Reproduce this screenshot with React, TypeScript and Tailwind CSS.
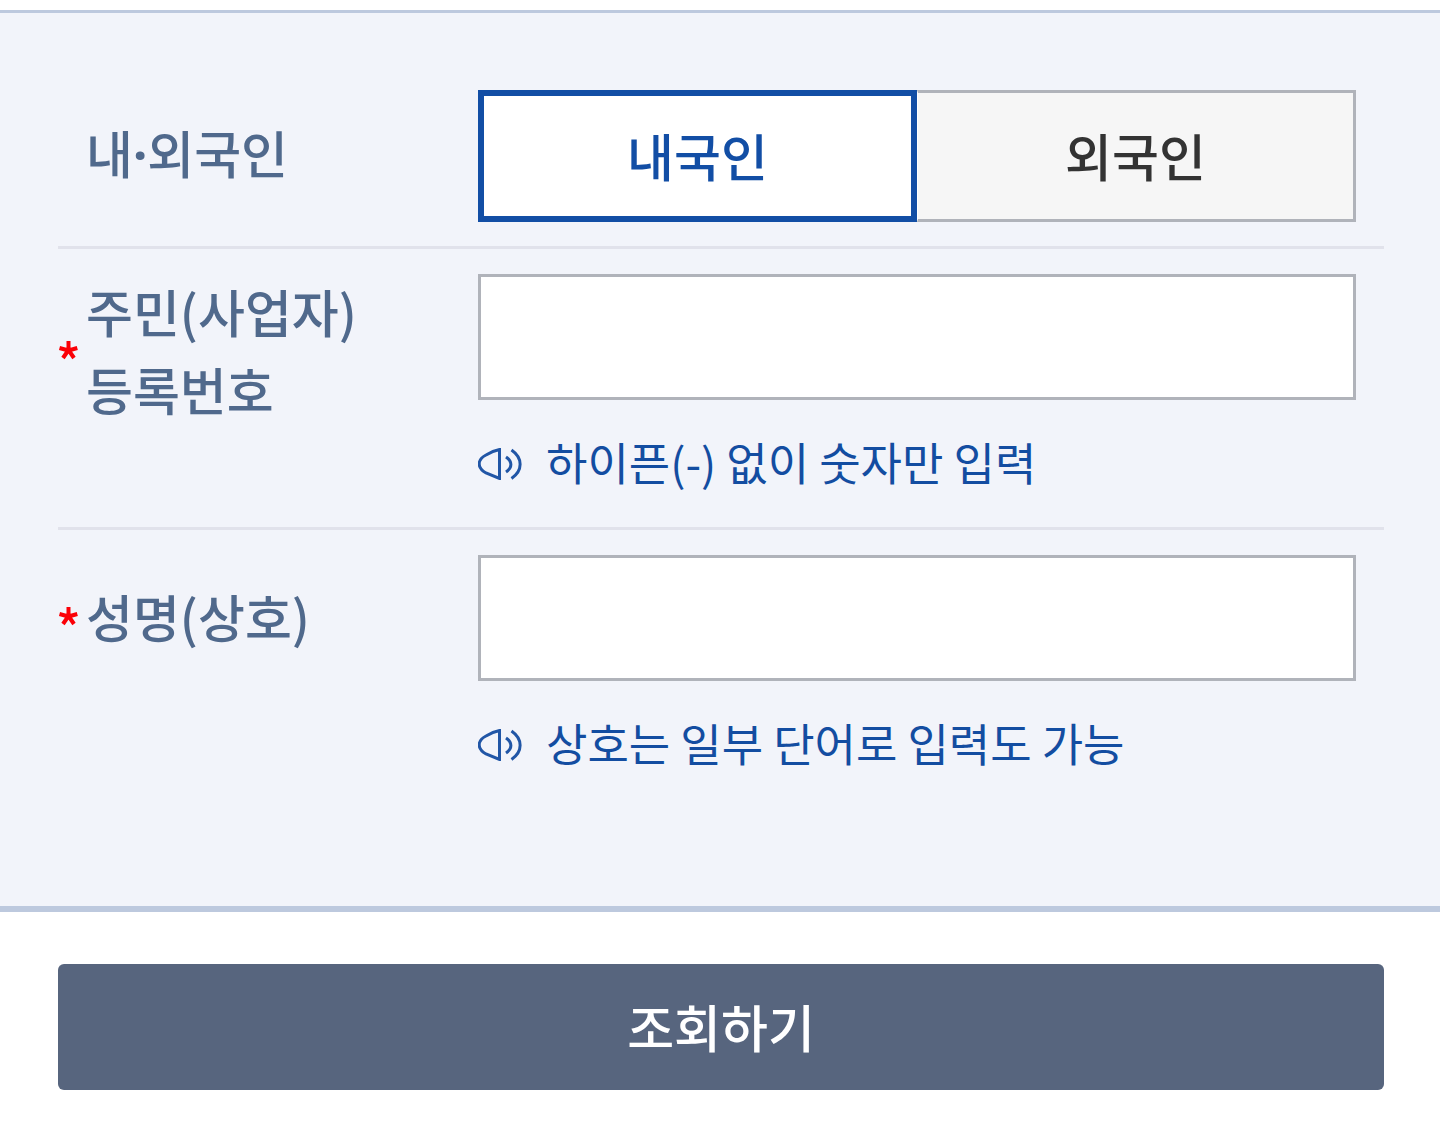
import { useState } from 'react'
import type { ReactNode } from 'react'

const residencyOptions = ['내국인', '외국인']

function RequiredMark() {
  return (
    <svg className="w-5 h-5 shrink-0" viewBox="0 0 20 20" fill="none" stroke="#fb0007" strokeWidth="4" aria-hidden="true">
      <path d="M10.500 11V1M10.500 10.500 1.500 8M10.500 10.500 19.300 8M10.500 10 5 18M10.500 10 16 18" />
    </svg>
  )
}

function SpeakerIcon() {
  return (
    <svg className="w-11 h-8 shrink-0" viewBox="0 0 44 32" fill="none" stroke="#2156a6" strokeWidth="3" aria-hidden="true">
      <path d="M21.500 1.500V30.500L8 25C3.500 22.500 1.200 19.500 1.200 16S4 9 8 7C12 4.500 16 2.500 21.500 1.500Z" />
      <path d="M28 9c6.500 4.500 6.500 10.500 0 15" />
      <path d="M33.500 2c11.500 8 11.500 20.500 0 28.500" />
    </svg>
  )
}

function Hint({ id, children }: { id: string; children: ReactNode }) {
  return (
    <p id={id} className="mt-6 flex h-[79px] items-center gap-6 text-[45px] font-normal text-[#134da1]">
      <SpeakerIcon />
      <span className="pb-1">{children}</span>
    </p>
  )
}

interface FieldProps {
  id: string
  label: ReactNode
  hint: string
}

function Field({ id, label, hint }: FieldProps) {
  return (
    <div className="flex items-start pr-7 pt-[25px] pb-6">
      <label htmlFor={id} className="-mt-0.5 flex min-h-[126px] w-[420px] shrink-0 items-center gap-2 text-[51px] leading-[78px] font-medium text-[#50698c]">
        <RequiredMark />
        <span>{label}</span>
      </label>
      <div className="min-w-0 flex-1">
        <input
          id={id}
          type="text"
          aria-describedby={`${id}-hint`}
          className="block h-[126px] w-full border-3 border-[#b0b3ba] bg-white px-6 text-[45px] text-[#333] outline-none"
        />
        <Hint id={`${id}-hint`}>{hint}</Hint>
      </div>
    </div>
  )
}

export default function App() {
  const [residency, setResidency] = useState('내국인')

  return (
    <form className="bg-white pt-2.5 pb-12 font-['Noto_Sans_CJK_KR',sans-serif]" onSubmit={e => e.preventDefault()}>
      <section className="border-t-3 border-b-6 border-[#bdc9de] bg-[#f2f4fa] pt-[52px] pr-14 pb-[98px] pl-[58px]">
        <div className="divide-y-3 divide-[#e1e2eb]">
          {/* Residency toggle */}
          <div className="flex items-center pr-7 pt-[25px] pb-6">
            <span id="residency" className="w-[420px] shrink-0 pb-1.5 pl-7 text-[51px] leading-[78px] font-medium text-[#50698c]">
              내<span className="font-['Noto_Sans',sans-serif] font-bold">·</span>외국인
            </span>
            <div role="group" aria-labelledby="residency" className="grid h-[132px] min-w-0 flex-1 grid-cols-2">
              {residencyOptions.map(option => (
                <button
                  key={option}
                  type="button"
                  aria-pressed={residency === option}
                  onClick={() => setResidency(option)}
                  className={`pb-0.5 text-[51px] font-medium ${
                    residency === option
                      ? 'border-6 border-[#124ea5] bg-white text-[#124ea5]'
                      : 'border-3 border-[#b0b3ba] border-l border-l-white bg-[#f6f6f6] text-[#333]'
                  }`}
                >
                  {option}
                </button>
              ))}
            </div>
          </div>

          <Field
            id="regNo"
            label={<>주민(사업자)<br />등록번호</>}
            hint="하이픈(-) 없이 숫자만 입력"
          />
          <Field id="name" label="성명(상호)" hint="상호는 일부 단어로 입력도 가능" />
        </div>
      </section>

      <div className="pt-[52px] pr-14 pl-[58px]">
        <button type="submit" className="h-[126px] w-full rounded-md bg-[#57657e] pb-0.5 text-[51px] font-medium text-white">
          조회하기
        </button>
      </div>
    </form>
  )
}
